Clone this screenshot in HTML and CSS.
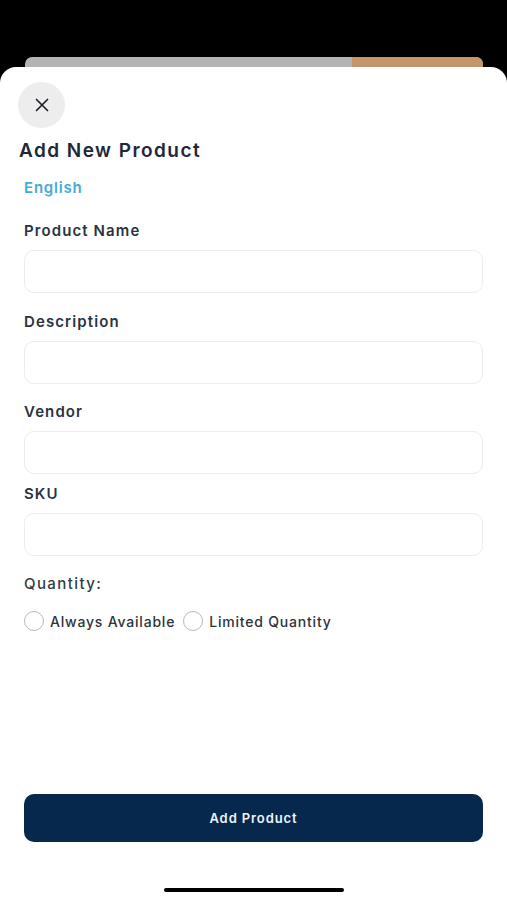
FILE: index.html
```html
<!DOCTYPE html>
<html lang="en">
<head>
<meta charset="utf-8">
<title>Add New Product</title>
<link rel="stylesheet" href="styles.css">
</head>
<body>
<div class="screen">
  <div class="behind-bar"><div class="behind-bar-fill"></div></div>
  <div class="sheet">
    <button class="close-btn" aria-label="Close">
      <svg width="16" height="16" viewBox="0 0 16 16"><path d="M2.5 2.5 L13.5 13.5 M13.5 2.5 L2.5 13.5" stroke="#1f2328" stroke-width="1.7" stroke-linecap="round" fill="none"/></svg>
    </button>
    <h1 class="title">Add New Product</h1>
    <div class="content">
      <div class="lang">English</div>
      <label class="label label-first">Product Name</label>
      <div class="input"></div>
      <label class="label label-desc">Description</label>
      <div class="input"></div>
      <label class="label label-vendor">Vendor</label>
      <div class="input"></div>
      <label class="label label-sku">SKU</label>
      <div class="input"></div>
      <div class="label label-qty">Quantity:</div>
      <div class="radios">
        <span class="radio"></span><span class="radio-text">Always Available</span>
        <span class="radio radio-second"></span><span class="radio-text">Limited Quantity</span>
      </div>
      <button class="submit">Add Product</button>
    </div>
    <div class="home-indicator"></div>
  </div>
</div>
</body>
</html>
```

FILE: styles.css
```css
* { box-sizing: border-box; }
html, body { margin: 0; padding: 0; }
body {
  background: #000;
  font-family: "Inter", "Lato", sans-serif;
}
.screen {
  width: 507px;
  height: 900px;
  overflow: hidden;
  display: flex;
  flex-direction: column;
  padding-top: 57px;
}
.behind-bar {
  margin: 0 24px 0 25px;
  height: 10px;
  background: #b3b3b3;
  border-radius: 7px 7px 0 0;
  display: flex;
  justify-content: flex-end;
  overflow: hidden;
}
.behind-bar-fill {
  width: 131px;
  background: #c4966c;
}
.sheet {
  flex: 1;
  background: #fff;
  border-radius: 16px 16px 0 0;
  display: flex;
  flex-direction: column;
}
.close-btn {
  margin: 15px 0 0 18px;
  width: 47px;
  height: 46px;
  border-radius: 50%;
  border: none;
  background: #ededed;
  display: flex;
  align-items: center;
  justify-content: center;
  padding: 0;
}
.title {
  margin: 11px 0 0 19px;
  font-size: 19px;
  line-height: 24px;
  font-weight: 600;
  color: #1d2838;
  letter-spacing: 1.45px;
}
.content {
  flex: 1;
  display: flex;
  flex-direction: column;
  padding: 0 24px;
}
.lang {
  margin-top: 15px;
  font-size: 15px;
  line-height: 20px;
  font-weight: 600;
  color: #43abd6;
  letter-spacing: 0.8px;
}
.label {
  display: block;
  font-size: 15px;
  line-height: 20px;
  font-weight: 600;
  color: #2a3340;
  letter-spacing: 1.1px;
}
.label-first { margin-top: 23px; }
.label-desc { margin-top: 19px; }
.label-vendor { margin-top: 18px; }
.label-sku { margin-top: 10px; }
.label-qty { margin-top: 18px; font-weight: 500; color: #333a44; letter-spacing: 1.4px; }
.input {
  margin-top: 9px;
  height: 43px;
  border: 1px solid #ececec;
  border-radius: 10px;
  background: #fff;
}
.radios {
  margin-top: 17px;
  display: flex;
  align-items: center;
  height: 20px;
}
.radio {
  width: 20px;
  height: 20px;
  border-radius: 50%;
  border: 1.5px solid #b9b9b9;
  flex: none;
}
.radio-second { margin-left: 8px; }
.radio-text {
  margin-left: 6px;
  font-size: 14px;
  font-weight: 500;
  color: #2d333b;
  letter-spacing: 0.8px;
}
.submit {
  margin-top: auto;
  height: 48px;
  border: none;
  border-radius: 10px;
  background: #06284d;
  color: #eef2f7;
  font-family: "Inter", "Lato", sans-serif;
  font-size: 13px;
  font-weight: 600;
  letter-spacing: 0.9px;
}
.home-indicator {
  margin: 46px auto 8px;
  width: 180px;
  height: 4px;
  border-radius: 2px;
  background: #000;
}
```
